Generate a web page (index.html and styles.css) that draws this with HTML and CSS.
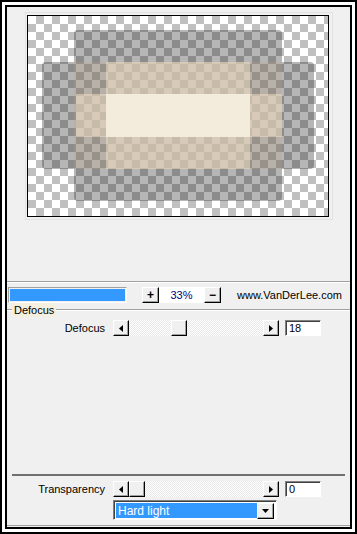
FILE: index.html
```html
<!DOCTYPE html>
<html>
<head>
    <title>Defocus</title>
    <link rel="stylesheet" href="styles.css">
</head>
<body>
<div class="frame">
    <div class="panel">
        <div class="preview-wrap">
            <div class="preview">
                <div class="shape dark v"></div>
                <div class="shape dark h-left"></div>
                <div class="shape dark h-right"></div>
                <div class="shape tint box"></div>
                <div class="shape tan t1"></div>
                <div class="shape tan t2"></div>
                <div class="shape cream"></div>
            </div>
        </div>

        <div class="sep"></div>

        <div class="status">
            <div class="progress"><div class="progress-fill"></div></div>
            <div class="btn pm plus">+</div>
            <div class="zoom">33%</div>
            <div class="btn pm">&minus;</div>
            <span class="url">www.VanDerLee.com</span>
        </div>

        <div class="group-head">
            <span class="line short"></span>
            <span class="legend">Defocus</span>
            <span class="line"></span>
        </div>

        <div class="row">
            <span class="label">Defocus</span>
            <div class="scroll">
                <div class="btn arrow"><svg width="4" height="7" viewBox="0 0 4 7"><polygon points="4,0 4,7 0,3.5" fill="#000"/></svg></div>
                <div class="track"><div class="btn thumb" style="margin-left: 42px"></div></div>
                <div class="btn arrow"><svg width="4" height="7" viewBox="0 0 4 7"><polygon points="0,0 0,7 4,3.5" fill="#000"/></svg></div>
            </div>
            <div class="num">18</div>
        </div>

        <div class="fill"></div>

        <div class="sep2"></div>

        <div class="row row-low">
            <span class="label">Transparency</span>
            <div class="scroll">
                <div class="btn arrow"><svg width="4" height="7" viewBox="0 0 4 7"><polygon points="4,0 4,7 0,3.5" fill="#000"/></svg></div>
                <div class="track"><div class="btn thumb" style="margin-left: 0px"></div></div>
                <div class="btn arrow"><svg width="4" height="7" viewBox="0 0 4 7"><polygon points="0,0 0,7 4,3.5" fill="#000"/></svg></div>
            </div>
            <div class="num">0</div>
        </div>

        <div class="select">
            <span class="select-value">Hard light</span>
            <div class="btn drop"><svg width="7" height="4" viewBox="0 0 7 4"><polygon points="0,0 7,0 3.5,4" fill="#000"/></svg></div>
        </div>
    </div>
</div>
</body>
</html>
```

FILE: styles.css
```css
body {
    margin: 0;
    background-color: #ffffff;
    font-family: "Liberation Sans", Arial, sans-serif;
    font-size: 11px;
    color: #000000;
}
.frame {
    width: 357px;
    height: 534px;
    box-sizing: border-box;
    border: 2px solid #000000;
    padding: 3px;
    background-color: #ffffff;
}
.panel {
    height: 100%;
    box-sizing: border-box;
    border: 2px solid #000000;
    background-color: #f0f0f0;
    display: flex;
    flex-direction: column;
    padding-bottom: 7px;
    box-shadow: inset 0 -1px 0 #f0f0f0, inset 0 -2px 0 #a0a0a0;
}

/* preview */
.preview-wrap {
    align-self: flex-start;
    margin: 5px 0 0 18px;
    border: 1px solid #e2e2e2;
    padding: 2px 3px 2px 1px;
}
.preview {
    position: relative;
    width: 300px;
    height: 200px;
    border: 1px solid #000000;
    overflow: hidden;
    background: repeating-conic-gradient(#c0c0c0 0 25%, #ffffff 0 50%) 0 0 / 16px 16px;
}
.shape {
    position: absolute;
}
.dark {
    background-color: rgba(40, 40, 40, 0.34);
}
.v {
    left: 46px;
    top: 14px;
    width: 208px;
    height: 171px;
    border-radius: 4px;
}
.h-left {
    left: 14px;
    top: 46px;
    width: 32px;
    height: 107px;
    border-radius: 4px 0 0 4px;
}
.h-right {
    left: 254px;
    top: 46px;
    width: 32px;
    height: 107px;
    border-radius: 0 4px 4px 0;
}
.tint {
    background-color: rgba(190, 165, 130, 0.25);
}
.box {
    left: 46px;
    top: 46px;
    width: 208px;
    height: 107px;
}
.tan {
    background-color: rgba(245, 228, 200, 0.5);
}
.t1 {
    left: 78px;
    top: 46px;
    width: 144px;
    height: 107px;
}
.t2 {
    left: 48px;
    top: 78px;
    width: 206px;
    height: 43px;
}
.cream {
    left: 78px;
    top: 78px;
    width: 144px;
    height: 43px;
    background-color: #f3ebdb;
}

/* separators */
.sep {
    margin-top: 61px;
    border-top: 1px solid #a0a0a0;
    border-bottom: 1px solid #ffffff;
}
.sep2 {
    margin: 0 5px;
    border-top: 2px solid #707070;
}
.fill {
    flex: 1;
}

/* buttons */
.btn {
    box-sizing: border-box;
    background-color: #f0f0f0;
    border: 1px solid;
    border-color: #ffffff #000000 #000000 #ffffff;
    box-shadow: inset -1px -1px 0 #a0a0a0;
    display: flex;
    align-items: center;
    justify-content: center;
}

/* status bar */
.status {
    margin-top: 4px;
    height: 16px;
    display: flex;
    align-items: center;
}
.progress {
    margin-left: 1px;
    width: 119px;
    height: 16px;
    box-sizing: border-box;
    border: 1px solid;
    border-color: #a0a0a0 #ffffff #ffffff #a0a0a0;
    padding: 1px;
}
.progress-fill {
    height: 100%;
    background-color: #3399ff;
}
.pm {
    width: 17px;
    height: 16px;
    font-weight: bold;
    font-size: 12px;
    line-height: 1;
}
.plus {
    margin-left: 15px;
}
.zoom {
    width: 45px;
    height: 16px;
    line-height: 16px;
    background-color: #ffffff;
    color: #000080;
    text-align: center;
}
.url {
    margin-left: 16px;
}

/* group box */
.group-head {
    height: 14px;
    display: flex;
    align-items: center;
}
.line {
    flex: 1;
    border-top: 1px solid #a0a0a0;
    border-bottom: 1px solid #ffffff;
}
.line.short {
    flex: 0 0 5px;
}
.legend {
    background-color: #f4efdf;
    padding: 0 2px 0 2px;
    line-height: 14px;
}

/* slider rows */
.row {
    margin-top: 3px;
    height: 16px;
    display: flex;
    align-items: center;
}
.row-low {
    margin-top: 5px;
}
.label {
    width: 98px;
    margin-right: 8px;
    text-align: right;
}
.scroll {
    width: 166px;
    height: 16px;
    display: flex;
}
.arrow {
    width: 16px;
    height: 16px;
}
.track {
    flex: 1;
    display: flex;
    background: repeating-conic-gradient(#ffffff 0 25%, #e8e8e8 0 50%) 0 0 / 2px 2px;
}
.thumb {
    width: 16px;
    height: 16px;
}
.num {
    margin-left: 6px;
    width: 36px;
    height: 16px;
    box-sizing: border-box;
    background-color: #ffffff;
    border: 1px solid;
    border-color: #808080 #ffffff #ffffff #808080;
    box-shadow: inset 1px 1px 0 #404040;
    padding: 1px 0 0 3px;
    line-height: 13px;
}

/* drop-down */
.select {
    margin: 3px 0 0 106px;
    width: 164px;
    height: 20px;
    box-sizing: border-box;
    border: 1px solid;
    border-color: #808080 #ffffff #ffffff #808080;
    box-shadow: inset 1px 1px 0 #404040;
    padding: 2px 2px 1px 2px;
    display: flex;
    background-color: #ffffff;
}
.select-value {
    flex: 1;
    background-color: #3399ff;
    color: #ffffff;
    font-size: 12px;
    line-height: 16px;
    padding-left: 2px;
}
.drop {
    width: 17px;
    height: 16px;
}
```
